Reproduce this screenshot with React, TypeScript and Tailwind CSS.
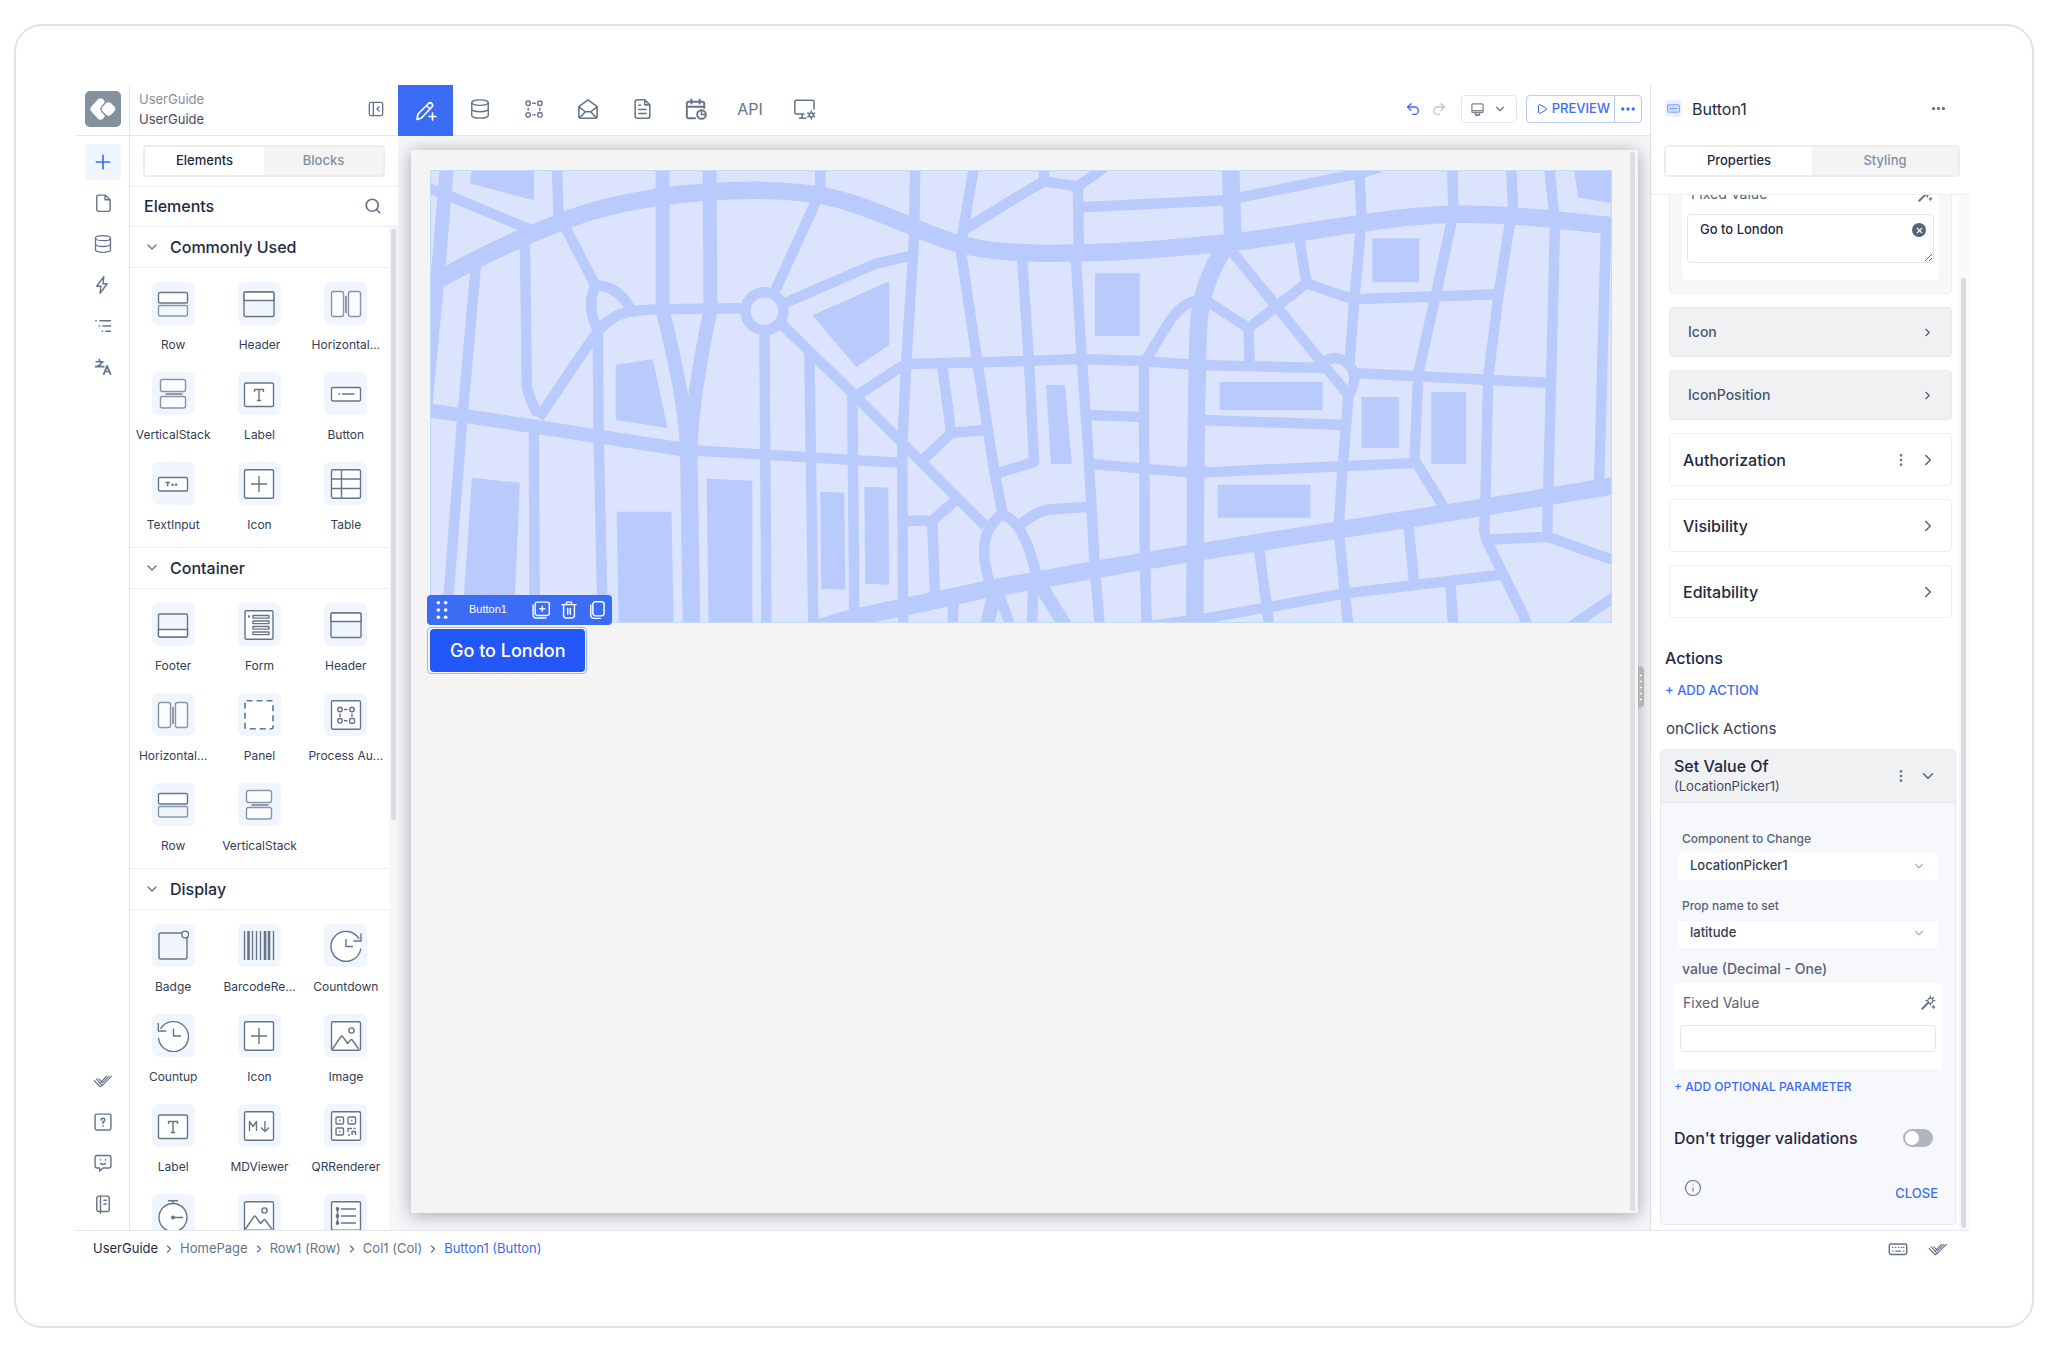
import React, { useState } from 'react';
import {
  ChevronDown,
  ChevronRight,
  Database,
  Ellipsis,
  EllipsisVertical,
  Info,
  Play,
  Redo2,
  Search,
  Undo2,
  X,
} from 'lucide-react';

interface IconProps {
  size?: number;
  className?: string;
  children?: React.ReactNode;
}

// Base for the 24px line icons
function LineIcon({ size = 20, className = '', children }: IconProps) {
  return (
    <svg
      width={size}
      height={size}
      viewBox="0 0 24 24"
      fill="none"
      stroke="currentColor"
      strokeWidth="1.7"
      strokeLinecap="round"
      strokeLinejoin="round"
      className={className}
      aria-hidden="true"
    >
      {children}
    </svg>
  );
}

// Base for the drawings inside the element tiles
function TileIcon({ children }: { children: React.ReactNode }) {
  return (
    <svg
      viewBox="0 0 32 32"
      fill="none"
      stroke="#66748a"
      strokeWidth="1.4"
      strokeLinejoin="round"
      className="h-8 w-8"
      aria-hidden="true"
    >
      {children}
    </svg>
  );
}

const tileIcons: Record<string, React.ReactNode> = {
  row: (
    <>
      <rect x="1.5" y="4.5" width="29" height="10.5" rx="1.5" fill="#fff" />
      <rect x="1.5" y="17.5" width="29" height="10.5" rx="1.5" opacity="0.75" />
    </>
  ),
  header: (
    <>
      <rect x="1" y="4" width="30" height="24.5" rx="1.5" />
      <path d="M1 12.5V5.5Q1 4 2.5 4h27Q31 4 31 5.5v7z" fill="#fff" />
    </>
  ),
  footer: (
    <>
      <rect x="1.5" y="5" width="29" height="23" rx="1.5" />
      <path d="M1.5 20.5v6q0 1.5 1.5 1.5h26q1.5 0 1.5-1.5v-6z" fill="#fff" />
    </>
  ),
  horizontal: (
    <>
      <rect x="1.5" y="3.5" width="12" height="25" rx="2" fill="#fff" opacity="0.75" />
      <rect x="18.5" y="3.5" width="12" height="25" rx="2" fill="#fff" opacity="0.75" />
      <path d="M16 8v17" />
    </>
  ),
  vertical: (
    <>
      <rect x="3.5" y="1.5" width="25" height="12" rx="2" fill="#fff" opacity="0.75" />
      <rect x="3.5" y="18.5" width="25" height="11.5" rx="2" fill="#fff" opacity="0.75" />
      <path d="M8.5 16h17" />
    </>
  ),
  label: (
    <>
      <rect x="1.5" y="5" width="29" height="23.5" rx="1.5" fill="#fff" />
      <path d="M11.5 14v-2.5h9V14M16 11.5v11M13.8 22.5h4.4" />
    </>
  ),
  button: (
    <>
      <rect x="1.5" y="9.5" width="29" height="13.5" rx="1.5" fill="#fff" />
      <path d="M8.5 16h1.6M12 16h12.5" />
    </>
  ),
  textInput: (
    <>
      <rect x="1.5" y="9.5" width="29" height="13.5" rx="1.5" fill="#fff" />
      <path d="M8.5 14.5h4.5M10.7 14.5v4" />
      <circle cx="15.5" cy="16.8" r="0.6" />
      <circle cx="19" cy="16.8" r="0.6" />
    </>
  ),
  icon: (
    <>
      <rect x="1.5" y="1.8" width="29" height="28.5" rx="1.5" fill="#fff" />
      <path d="M16 8v16M8 16h16" />
    </>
  ),
  table: (
    <>
      <rect x="1.5" y="1.8" width="29" height="28.5" rx="1.5" fill="#fff" />
      <path d="M11.5 1.8v28.5M1.5 11h29M1.5 20.5h29" />
    </>
  ),
  form: (
    <>
      <rect x="2" y="1.8" width="28" height="28.5" rx="1.5" fill="#fff" />
      <circle cx="6" cy="7.5" r="0.5" />
      <rect x="10" y="6.5" width="16" height="2.6" />
      <rect x="10" y="12" width="16" height="2.6" />
      <rect x="10" y="17.5" width="16" height="2.6" />
      <rect x="10" y="23" width="16" height="2.6" />
    </>
  ),
  panel: <rect x="2" y="1.8" width="28" height="28" rx="1.5" fill="#fff" strokeDasharray="6 4" strokeWidth="1.6" />,
  process: (
    <>
      <rect x="1.5" y="1.8" width="29" height="28.5" rx="1.5" fill="#fff" />
      <circle cx="10" cy="10.5" r="2.3" />
      <circle cx="22" cy="10.5" r="2.3" />
      <circle cx="10" cy="21.8" r="2.3" />
      <rect x="19.7" y="19.5" width="4.8" height="4.8" rx="1" />
      <path d="M14 10.5h3.5M14 21.8h3.5M10 14.5v3.5M22 14.5v3.5" />
    </>
  ),
  badge: (
    <>
      <rect x="2" y="3" width="28" height="26" rx="1.5" />
      <circle cx="28.2" cy="4.5" r="3.4" fill="#fff" />
    </>
  ),
  barcode: (
    <>
      <path d="M1.5 1v29M9.5 1v29M13.5 1v29M17.5 1v29M30.5 1v29" />
      <path d="M5.5 1v29M22 1v29M26 1v29" strokeWidth="2.6" />
    </>
  ),
  countdown: (
    <>
      <circle cx="16" cy="16.5" r="14.5" fill="#fff" stroke="none" />
      <path d="M30.8 18.5A15 15 0 1 1 29 9M31 3.5v7.5h-7.5M16 9v7.5h7" />
    </>
  ),
  countup: (
    <>
      <circle cx="16" cy="16" r="14.5" fill="#fff" stroke="none" />
      <path d="M1.5 18A15 15 0 1 0 3.5 9M1.3 3v8h8M16.5 8.5v7.5h7.5" />
    </>
  ),
  image: (
    <>
      <rect x="1.5" y="1.8" width="29" height="28.5" rx="1.5" fill="#fff" />
      <circle cx="21.5" cy="10.5" r="2.6" />
      <path d="M2.5 29l8.5-12.5q.8-.8 1.6 0l5 7 3-3.5q.8-.8 1.6 0l6.5 9" />
    </>
  ),
  markdown: (
    <>
      <rect x="1.5" y="1.8" width="29" height="28.5" rx="1.5" fill="#fff" />
      <path d="M6.5 21V11.5l3.5 5 3.5-5V21M22 11v10.5M18 17.5l4 4 4-4" />
    </>
  ),
  qr: (
    <>
      <rect x="1.5" y="1.8" width="29" height="28.5" rx="1.5" fill="#fff" />
      <rect x="6" y="7" width="7.5" height="7" rx="1" />
      <rect x="18" y="7" width="7.5" height="7" rx="1" />
      <rect x="6" y="18" width="7.5" height="7" rx="1" />
      <path d="M9 10.5h1.5M21 10.5h1.5M9 21.5h1.5M18 22v-3.5h4M25.5 18.5h-2M25.5 25v-3.5h-3.5V25M18 25h2" />
    </>
  ),
  timer: (
    <>
      <circle cx="16" cy="17.5" r="14" fill="#fff" />
      <path d="M16 3.5V.5M11 .8h10M16 17.5h10" />
      <circle cx="16" cy="17.5" r="1.3" fill="#66748a" />
    </>
  ),
  list: (
    <>
      <rect x="1.5" y="1.8" width="29" height="28.5" rx="1.5" fill="#fff" />
      <path d="M7.5 9v14M11 9h15M11 16h15M11 23h15" />
      <circle cx="7.5" cy="9" r="1.2" fill="#66748a" />
      <circle cx="7.5" cy="16" r="1.2" fill="#66748a" />
      <circle cx="7.5" cy="23" r="1.2" fill="#66748a" />
    </>
  ),
};

const sections = [
  {
    title: 'Commonly Used',
    items: [
      ['Row', 'row'],
      ['Header', 'header'],
      ['Horizontal...', 'horizontal'],
      ['VerticalStack', 'vertical'],
      ['Label', 'label'],
      ['Button', 'button'],
      ['TextInput', 'textInput'],
      ['Icon', 'icon'],
      ['Table', 'table'],
    ],
  },
  {
    title: 'Container',
    items: [
      ['Footer', 'footer'],
      ['Form', 'form'],
      ['Header', 'header'],
      ['Horizontal...', 'horizontal'],
      ['Panel', 'panel'],
      ['Process Au...', 'process'],
      ['Row', 'row'],
      ['VerticalStack', 'vertical'],
    ],
  },
  {
    title: 'Display',
    items: [
      ['Badge', 'badge'],
      ['BarcodeRe...', 'barcode'],
      ['Countdown', 'countdown'],
      ['Countup', 'countup'],
      ['Icon', 'icon'],
      ['Image', 'image'],
      ['Label', 'label'],
      ['MDViewer', 'markdown'],
      ['QRRenderer', 'qr'],
      ['', 'timer'],
      ['', 'image'],
      ['', 'list'],
    ],
  },
];

const DoubleCheck = ({ size = 20 }: IconProps) => (
  <LineIcon size={size}>
    <path
      d="M1.5 11.5l6 6M4 9.5L11 17.5L22 6.500M8.5 14.5L16 6.500M1.5 11.5l7 7.500L11.500 16.500M7 9.500l4.500 4.500L19 6.500"
      strokeWidth="1.400"
    />
  </LineIcon>
);

const Wand = () => (
  <LineIcon size={15} className="text-[#66748a]">
    <path d="M2 22L12 12" strokeWidth="3" />
    <circle cx="15" cy="9" r="4" />
    <path d="M15 2v2M15 14v2M8 9h2M20 9h2M20 4l-1.5 1.5M20 17v4M18 19h4" strokeWidth="2.2" />
  </LineIcon>
);

const Logo = () => (
  <svg viewBox="0 0 36 36" className="h-9 w-9" role="img" aria-label="Home">
    <rect width="36" height="36" rx="5" fill="#84919f" />
    <path
      d="M15.500 11.500L9.500 18L15.500 24.500"
      fill="none"
      stroke="#fff"
      strokeWidth="8"
      strokeLinecap="round"
      strokeLinejoin="round"
    />
    <rect
      x="-6.500"
      y="-6.500"
      width="13"
      height="13"
      rx="4.500"
      transform="translate(23.500 18) rotate(45)"
      fill="#fff"
      stroke="#84919f"
      strokeWidth="1.400"
    />
  </svg>
);

const railTop = [
  {
    label: 'Pages',
    icon: (
      <LineIcon>
        <path d="M7 2.5h7.5L20.5 8v11.5q0 2.5-2.5 2.5H7q-2.5 0-2.5-2.5V5Q4.5 2.5 7 2.5zM14.5 2.5V8h6" />
      </LineIcon>
    ),
  },
  { label: 'Data', icon: <Database size={20} strokeWidth={1.6} /> },
  {
    label: 'Events',
    icon: (
      <LineIcon>
        <path d="M13 2L4.5 13.500h5L8.500 22l8.500-11.500h-5z" />
      </LineIcon>
    ),
  },
  {
    label: 'Outline',
    icon: (
      <LineIcon size={18}>
        <path d="M2.500 5h.4M8 5h14M7 12h.4M12 12h10M11 19h.4M16 19h6" strokeWidth="2.200" />
      </LineIcon>
    ),
  },
  {
    label: 'Languages',
    icon: (
      <LineIcon size={18}>
        <path d="M3 5h9M7 2l1 3M2 11.5h11M11 5.5Q9 9 4 11.5M13 21.5l4.5-11 4.5 11M14.5 18h6" strokeWidth="2.300" />
      </LineIcon>
    ),
  },
];

const railBottom = [
  { label: 'Checks', icon: <DoubleCheck /> },
  {
    label: 'Help',
    icon: (
      <LineIcon>
        <rect x="2.5" y="2.5" width="19" height="19" rx="2" />
        <path d="M9.8 9.5q.2-2 2.2-2t2.2 1.9Q14.2 11 12 12v1.5M12 16.5v.3" strokeWidth="2" />
      </LineIcon>
    ),
  },
  {
    label: 'Feedback',
    icon: (
      <LineIcon>
        <path d="M5 3h14q2.5 0 2.5 2.5v10Q21.5 18 19 18h-7l-4 3.5V18H5q-2.5 0-2.5-2.5v-10Q2.5 3 5 3z" />
        <path d="M9 8v.4M15 8v.4M9 12.5q3 2.5 6 0" />
      </LineIcon>
    ),
  },
  {
    label: 'Docs',
    icon: (
      <LineIcon>
        <rect x="4.5" y="2.5" width="15" height="18.5" rx="2.5" />
        <path d="M9 2.5V23M13 7.5h3M13 12h3" />
      </LineIcon>
    ),
  },
];

const modules = [
  { label: 'Data models', icon: <Database size={22} strokeWidth={1.5} /> },
  {
    label: 'Processes',
    icon: (
      <LineIcon size={20}>
        <circle cx="5" cy="5" r="2.700" />
        <circle cx="19" cy="5" r="2.700" />
        <circle cx="5" cy="19" r="2.700" />
        <rect x="16.500" y="16.500" width="5.200" height="5.200" rx="1.200" />
        <path d="M10.500 5h3M10.500 19h3M5 11v2.500M19 11v2.500" />
      </LineIcon>
    ),
  },
  {
    label: 'Mail templates',
    icon: (
      <LineIcon size={22}>
        <path d="M2 9.5L12 2l10 7.5V20q0 2-2 2H4q-2 0-2-2zM2.5 10l6.5 5h6l6.5-5M3 21.5L9 15M21 21.5L15 15" />
      </LineIcon>
    ),
  },
  {
    label: 'Documents',
    icon: (
      <LineIcon size={22}>
        <path d="M7 2h8l5.5 5.5V19.5Q20.5 22 18 22H7q-2.5 0-2.5-2.5v-15Q4.5 2 7 2zM15 2v5.5h5.5M8.5 8h2M8.5 12.5h8M8.5 17h8" />
      </LineIcon>
    ),
  },
  {
    label: 'Schedules',
    icon: (
      <LineIcon size={22}>
        <path d="M11 22H4q-2 0-2-2V6q0-2 2-2h15q2 0 2 2v5M2 9.5h19M7 1.5V6M16 1.5V6" strokeWidth="2.100" />
        <circle cx="18" cy="18" r="4.7" strokeWidth="2.100" />
        <path d="M18 13.5V18h4.5" />
      </LineIcon>
    ),
  },
  { label: 'API', icon: <span className="text-base">API</span> },
  {
    label: 'Environment',
    icon: (
      <LineIcon size={22}>
        <path d="M12 17.5H3.5Q2 17.5 2 16V4q0-1.5 1.5-1.5h18Q23 2.500 23 4v8M10 17.5V22M7 22h7" />
        <circle cx="20" cy="18.5" r="2.2" />
        <path d="M20 14.2v1.5M20 21.3v1.5M16.2 16.4l1.3.8M22.5 19.8l1.3.8M16.2 20.6l1.3-.8M22.5 17.2l1.3-.8" />
      </LineIcon>
    ),
  },
];

function Tabs({ tabs, active, onChange }: { tabs: string[]; active: string; onChange: (tab: string) => void }) {
  return (
    <div role="tablist" className="flex h-8 rounded border-2 border-[#ededed] bg-[#f4f4f4] text-[13px] font-medium">
      {tabs.map((tab) => (
        <button
          key={tab}
          role="tab"
          aria-selected={tab === active}
          onClick={() => onChange(tab)}
          className={tab === active ? 'flex-1 bg-white text-[#1f2a44]' : 'flex-1 text-[#8290a3]'}
        >
          {tab}
        </button>
      ))}
    </div>
  );
}

function Rail() {
  return (
    <nav className="flex w-[54px] shrink-0 flex-col border-r border-[#e5e7eb] text-[#66748a]">
      <div className="flex h-[51px] shrink-0 items-center justify-center border-b border-[#e5e7eb] pb-[2px]">
        <Logo />
      </div>
      <div className="flex flex-1 flex-col items-center gap-[5px] py-2">
        <button aria-label="Add element" className="flex h-9 w-9 items-center justify-center rounded bg-[#f0f6ff] text-[#3b6cf6]">
          <LineIcon>
            <path d="M12 4v16M4 12h16" strokeWidth="2" />
          </LineIcon>
        </button>
        {railTop.map((item) => (
          <button key={item.label} aria-label={item.label} className="flex h-9 w-9 items-center justify-center">
            {item.icon}
          </button>
        ))}
        <div className="flex-1" />
        {railBottom.map((item) => (
          <button key={item.label} aria-label={item.label} className="flex h-9 w-9 items-center justify-center">
            {item.icon}
          </button>
        ))}
      </div>
    </nav>
  );
}

function ElementsPanel() {
  const [tab, setTab] = useState('Elements');

  return (
    <aside className="flex w-[268px] shrink-0 flex-col text-[#1f2a44]">
      <div className="flex h-[51px] shrink-0 items-center justify-between border-b border-[#e5e7eb] pr-[10px] pb-[2px] pl-[9px] text-[13px] leading-5 text-[#3f4b62]">
        <div>
          <p className="text-[#8290a3]">UserGuide</p>
          <p>UserGuide</p>
        </div>
        <button aria-label="Collapse panel" className="p-1 text-[#66748a]">
          <LineIcon size={16}>
            <rect x="2" y="2" width="20" height="20" rx="2.5" strokeWidth="2" />
            <path d="M8 2v20M16.5 9l-3 3 3 3" strokeWidth="2" />
          </LineIcon>
        </button>
      </div>
      <div className="h-[51px] shrink-0 border-b border-[#eceef1] px-[13px] py-[9px]">
        <Tabs tabs={['Elements', 'Blocks']} active={tab} onChange={setTab} />
      </div>
      <div className="flex h-10 shrink-0 items-center justify-between border-b border-[#eceef1] pr-3 pb-[2px] pl-[14px]">
        <h2 className="text-base font-medium">Elements</h2>
        <button aria-label="Search elements" className="px-1 text-[#66748a]">
          <Search size={18} strokeWidth={2.3} />
        </button>
      </div>
      <div className="flex min-h-0 flex-1">
        <div className="min-w-0 flex-1 overflow-hidden">
          {sections.map((section) => (
            <section key={section.title} className="border-b border-[#eceef1]">
              <h3 className="border-b border-[#eceef1]">
                <button className="flex h-10 w-full items-center gap-[10px] pl-[14px] text-base font-medium">
                  <ChevronDown size={16} className="text-[#66748a]" />
                  {section.title}
                </button>
              </h3>
              <div className="grid grid-cols-3 gap-y-[18px] pt-[14px] pb-[13px]">
                {section.items.map(([name, icon], i) => (
                  <div key={i} className="flex flex-col items-center gap-[11px]">
                    <div className="flex h-[43px] w-[43px] items-center justify-center rounded-md bg-[#f1f6fe]">
                      <TileIcon>{tileIcons[icon]}</TileIcon>
                    </div>
                    {name && <span className="text-[12px] leading-[18px] whitespace-nowrap text-[#344057]">{name}</span>}
                  </div>
                ))}
              </div>
            </section>
          ))}
        </div>
        <div className="w-[9px] shrink-0 bg-[#f6f7f9] px-[2px] pt-[2px]">
          <div className="h-[59%] rounded-full bg-[#dadce2]" />
        </div>
      </div>
    </aside>
  );
}

function TopBar() {
  return (
    <header className="flex h-[51px] shrink-0 items-center justify-between border-b border-[#e5e7eb] pr-2 text-[#66748a]">
      <div className="flex self-stretch">
        <button aria-label="Designer" className="-mb-px flex w-[55px] items-center justify-center bg-[#3b6cf6] text-white">
          <LineIcon size={24}>
            <path d="M3 20.5l1-5.5L14.5 4.5q1.7-1.5 3.3 0 1.7 1.7 0 3.5L7.5 19zM12.5 6.5l3.5 3.5M18.5 14v7M15 17.500h7" />
          </LineIcon>
        </button>
        {modules.map((item) => (
          <button key={item.label} aria-label={item.label} className="flex w-[54px] items-center justify-center pb-[2px]">
            {item.icon}
          </button>
        ))}
      </div>
      <div className="flex items-center pb-[2px]">
        <button aria-label="Undo" className="mr-[10px] text-[#3b6cf6]">
          <Undo2 size={16} />
        </button>
        <button aria-label="Redo" className="mr-[14px] text-[#c0c5cd]">
          <Redo2 size={16} />
        </button>
        <button aria-label="Device" className="mr-[9px] flex h-7 w-14 items-center justify-center gap-2 rounded border border-[#e3e6ea]">
          <LineIcon size={15} className="text-[#7d8796]">
            <rect x="3" y="3" width="18" height="14" rx="2" strokeWidth="2" />
            <path d="M4 14h16M9 18v3h6v-3" strokeWidth="2.5" />
          </LineIcon>
          <ChevronDown size={14} />
        </button>
        <div className="flex h-7 items-stretch rounded border border-[#b9cbfc] text-[13px] font-medium text-[#3b6cf6]">
          <button className="flex items-center gap-1 border-r border-[#b9cbfc] pr-1 pl-[9px]">
            <Play size={12} />
            PREVIEW
          </button>
          <button aria-label="More preview options" className="flex w-[26px] items-center justify-center">
            <Ellipsis size={18} strokeWidth={2.5} />
          </button>
        </div>
      </div>
    </header>
  );
}

const mapBuildings = [
  '41,0 103,0 103,30 39,13',
  '185,195 222,189 237,258 185,250',
  '382,145 459,111 459,175 426,197',
  '41,308 89,313 83,453 31,453',
  '186,342 241,342 243,453 188,453',
  '276,309 322,311 322,453 278,453',
  '390,322 414,323 415,420 391,419',
  '434,317 458,318 459,415 435,414',
  '1145,0 1182,0 1182,33 1149,27',
  '665,103 710,103 710,166 665,166',
  '943,68 990,68 990,112 943,112',
  '790,212 893,212 893,240 790,240',
  '932,227 970,227 970,278 932,278',
  '1002,222 1037,222 1037,294 1002,294',
  '788,315 881,315 881,348 788,348',
  '616,215 635,215 642,294 621,294',
];

const mapStreets = [
  // west
  'M255 280L472 293',
  'M45 95L31 253L15 460',
  'M94 65L96 217Q98 228 107 244',
  'M103 255L104 460',
  'M-4 17L22 27L101 60',
  'M126 -4L128 50M132 52L165 116',
  'M165 115Q189 116 201 141',
  'M165 115Q155 136 167 160',
  'M316 138L229 139Q203 140 193 143Q180 147 168 160Q150 185 108 248',
  'M167 163L168 267L172 458',
  'M390 -4L390 24M387 28L345 120',
  'M352 134L444 94L482 85',
  'M485 -4L484 60L483 83L476 193L472 277L473 458',
  'M350 153L421 222L555 356',
  'M426 226L478 192',
  'M334 160L336 458',
  'M379 182L383 458',
  'M422 223L424 443',
  // middle
  'M544 -4L532 66',
  'M533 60L590 25L614 11M614 -4L614 11L648 16L676 -4',
  'M648 14L649 85L646 90L652 190L659 290L665 400L670 458',
  'M651 37L796 30L930 3L950 -3',
  'M530 76L547 190L564 300L573 346',
  'M592 86L599 193L604 291Q604 293 602 293L565 304',
  'M512 194L521 263L554 260M521 263L493 290',
  'M526 330L502 351L474 351M502 351L505 428',
  'M560 414Q544 366 571 345Q594 348 608 412',
  'M589 356Q604 343 617 340L659 337',
  'M524 425L522 458M569 425L581 458M603 418L602 458',
  'M474 194L595 191L649 189L712 191L768 195L900 198',
  'M714 190L715 390L717 458',
  'M657 245L714 247M660 294L764 303L987 293L1015 338',
  'M716 190L735 159Q750 133 768 130',
  'M770 250L916 255',
  'M779 132L819 158L877 113L923 129L1068 124',
  'M819 158L820 198M870 70L877 113',
  // east
  'M803 82L896 197L919 225',
  'M893 192Q912 182 922 198Q929 210 919 225L913 300L909 360L919 458',
  'M930 0L932 45L931 63L925 127L920 194',
  'M1023 -4L1024 40L1022 53L1006 127L989 203L985 293',
  'M1082 -4L1084 40L1080 57L1069 127L1059 207L1056 337L1055 358Q1055 364 1058 372L1094 445L1100 460',
  'M1120 -4L1126 52L1122 210L1119 323L1118 367L1058 370M1118 367L1186 391',
  'M1177 55L1170 318',
  'M924 203L1123 213',
  'M700 459L780 448L914 424L1072 405',
  'M829 376L840 458M979 354L985 415M1021 412L1024 458',
  'M1190 424L1140 458',
];

const mapAvenues = [
  'M16 -4L7 103L-6 240',
  'M-4 240L255 280',
  'M232 -4L232 140Q256 236 256 280',
  'M279 -4L280 140Q261 230 260 280',
  'M564 425L556 460M608 412L638 460',
];

const mapHighways = [
  'M-10 118L14 106C50 86 90 67 134 50C190 29 260 20 326 20S420 30 484 57C530 78 560 82 610 83C680 84 740 78 803 72C870 64 960 45 1025 44S1130 51 1190 56',
  'M360 467L419 449L555 420L665 400L764 383L910 360L1057 337L1190 315',
  'M258 275L261 460',
  'M801 -4L803 66C785 90 771 120 769 155C767 190 767 250 766 300L765 460',
];

function LocationMap() {
  return (
    <svg
      viewBox="0 0 1182 453"
      preserveAspectRatio="xMidYMid slice"
      role="img"
      aria-label="Map"
      className="block aspect-[1182/453] w-full border border-[#bfdcfb] bg-[#dce4fd]"
      fill="none"
      stroke="#b8cbfc"
      strokeLinejoin="round"
    >
      {mapBuildings.map((points) => (
        <polygon key={points} points={points} fill="#b8cbfc" stroke="none" />
      ))}
      {mapStreets.map((d) => (
        <path key={d} d={d} strokeWidth="10.5" />
      ))}
      {mapAvenues.map((d) => (
        <path key={d} d={d} strokeWidth="14" />
      ))}
      {mapHighways.map((d) => (
        <path key={d} d={d} strokeWidth="17.5" />
      ))}
      <circle cx="334" cy="141" r="19" strokeWidth="10.5" fill="#dce4fd" />
    </svg>
  );
}

function Canvas() {
  return (
    <main className="relative flex min-h-0 flex-1 bg-[#f3f5f8] pt-[14px] pr-3 pb-[17px] pl-[13px]">
      <div className="flex flex-1 bg-[#f4f4f4] shadow-[0_2px_16px_rgba(0,0,0,0.32)]">
        <div className="flex-1 pt-5 pr-[18px] pl-[19px]">
          <LocationMap />
          <div className="relative mt-1 -ml-[3px] w-fit rounded border border-[#9db9fb] p-px pl-[2px]">
            <button className="h-[43px] rounded bg-[#2457f8] px-5 text-lg font-medium text-white">
              Go to London
            </button>
            <div className="absolute bottom-full -left-px mb-[3px] flex h-[30px] w-[185px] items-center rounded-sm bg-[#3b6cf6] pl-2 text-white">
              <svg viewBox="0 0 14 22" className="h-5 w-[14px]" fill="currentColor" aria-hidden="true">
                <circle cx="3" cy="3" r="2" />
                <circle cx="11" cy="3" r="2" />
                <circle cx="3" cy="11" r="2" />
                <circle cx="11" cy="11" r="2" />
                <circle cx="3" cy="19" r="2" />
                <circle cx="11" cy="19" r="2" />
              </svg>
              <span className="flex-1 pb-[2px] pl-5 font-['Liberation_Sans',sans-serif] text-[11px]">Button1</span>
              <div className="flex gap-2 pr-[5px]">
                <button aria-label="Duplicate">
                  <LineIcon>
                    <rect x="5" y="2.5" width="17" height="16" rx="2.5" />
                    <path d="M2.5 6v12q0 3.5 3.5 3.5h12M13.5 7.5v6M10.5 10.5h6" />
                  </LineIcon>
                </button>
                <button aria-label="Delete">
                  <LineIcon>
                    <path d="M3.500 5.5h17M9 5V2.5h6V5M5.5 5.5V19q0 2.5 2.5 2.5h8q2.5 0 2.5-2.5V5.5M10.5 10v7M13.5 10v7" />
                  </LineIcon>
                </button>
                <button aria-label="Copy">
                  <LineIcon>
                    <rect x="7" y="2" width="13.5" height="17" rx="3" />
                    <path d="M4.5 6v12q0 4 4 4H16" />
                  </LineIcon>
                </button>
              </div>
            </div>
          </div>
        </div>
        <div className="w-2 shrink-0 py-[2px] pr-[3px]">
          <div className="h-full rounded-full bg-[#dcdee2]" />
        </div>
      </div>
      {/* Resize grip between canvas and inspector */}
      <div className="absolute top-1/2 right-[6px] mt-1 flex h-[41px] w-[6px] -translate-y-1/2 flex-col items-center justify-center gap-[4px] rounded-r bg-[#b4b4b4]">
        {[0, 1, 2, 3, 4].map((i) => (
          <span key={i} className="h-[2px] w-[2px] rounded-full bg-white" />
        ))}
      </div>
    </main>
  );
}

function SelectField({ id, label, value }: { id: string; label: string; value: string }) {
  return (
    <div className="flex flex-col gap-[5px] px-1">
      <label htmlFor={id} className="pl-1 text-[12px] leading-4 font-medium text-[#56637a]">
        {label}
      </label>
      <div className="relative">
        <select
          id={id}
          defaultValue={value}
          className="h-[27px] w-full appearance-none rounded bg-white px-3 pb-[2px] text-[13px] font-medium text-[#344057]"
        >
          <option>{value}</option>
        </select>
        <ChevronDown size={14} className="pointer-events-none absolute top-[7px] right-3 text-[#a3b3cf]" />
      </div>
    </div>
  );
}

function PropertiesPanel() {
  const [tab, setTab] = useState('Properties');
  const [text, setText] = useState('Go to London');
  const [skipValidation, setSkipValidation] = useState(false);

  return (
    <aside className="flex w-80 shrink-0 flex-col border-l border-[#e0e3e8] text-[#1f2a44]">
      <div className="flex h-[47px] shrink-0 items-center gap-[10px] pr-[23px] pl-[14px]">
        <span className="flex h-[17px] w-[17px] items-center justify-center rounded-sm bg-[#eaf1ff]">
          <LineIcon size={13} className="text-[#3b6cf6] opacity-60">
            <rect x="1" y="5" width="22" height="14" rx="2" fill="#b8cbfc" />
            <path d="M6 12h12" strokeWidth="2" />
          </LineIcon>
        </span>
        <h2 className="flex-1 text-base">Button1</h2>
        <button aria-label="Component menu" className="text-[#56637a]">
          <Ellipsis size={17} strokeWidth={2.5} />
        </button>
      </div>
      <div className="h-[63px] shrink-0 border-b border-[#eceef1] pt-[13px] pr-[10px] pl-[13px]">
        <Tabs tabs={['Properties', 'Styling']} active={tab} onChange={setTab} />
      </div>
      <div className="flex min-h-0 flex-1">
        <div className="min-w-0 flex-1 overflow-hidden pl-[9px]">
          <div className="mr-[7px] ml-[9px] flex flex-col gap-[13px]">
            <div className="-mt-[21px] rounded-b border border-[#eceef1] bg-[#f6f7f9] px-3 pb-[13px]">
              <div className="rounded bg-white px-[5px] pt-[9px] pb-[17px]">
                <div className="flex items-center justify-between pr-[1px] pl-1">
                  <label htmlFor="button-text" className="text-sm leading-5 text-[#56637a]">
                    Fixed Value
                  </label>
                  <Wand />
                </div>
                <div className="relative mt-[10px]">
                  <textarea
                    id="button-text"
                    value={text}
                    onChange={(e) => setText(e.target.value)}
                    className="block h-[49px] w-full resize-y rounded border border-[#e3e6ea] bg-white px-3 py-1 text-[13px] leading-5 font-medium text-[#1f2a44]"
                  />
                  <button
                    aria-label="Clear text"
                    onClick={() => setText('')}
                    className="absolute top-[9px] right-2 flex h-[14px] w-[14px] items-center justify-center rounded-full bg-[#56637a] text-white"
                  >
                    <X size={9} strokeWidth={3} />
                  </button>
                </div>
              </div>
            </div>
            {['Icon', 'IconPosition'].map((name) => (
              <button
                key={name}
                className="flex h-[50px] items-center justify-between rounded border border-[#e8eaed] bg-[#eff1f3] pr-[17px] pl-[18px] text-sm font-medium text-[#4a5770]"
              >
                {name}
                <ChevronRight size={13} />
              </button>
            ))}
            {['Authorization', 'Visibility', 'Editability'].map((name) => (
              <div key={name} className="flex h-[53px] items-center rounded border border-[#eceef1] pr-[14px] pl-[13px]">
                <h3 className="flex-1 text-base font-medium">{name}</h3>
                {name === 'Authorization' && (
                  <button aria-label="Authorization options" className="mr-[10px] text-[#66748a]">
                    <EllipsisVertical size={16} strokeWidth={2} />
                  </button>
                )}
                <button aria-label={`Open ${name}`} className="text-[#56637a]">
                  <ChevronRight size={18} />
                </button>
              </div>
            ))}
          </div>

          <h3 className="mt-7 pl-[5px] text-base font-medium">Actions</h3>
          <button className="mt-[10px] block pl-[5px] text-[13px] leading-5 font-medium text-[#3b6cf6]">+ ADD ACTION</button>
          <h4 className="mt-[17px] pl-[6px] text-[15px] leading-6 text-[#344057]">onClick Actions</h4>

          <div className="mt-2 mr-[3px] rounded border border-[#e6e8ec] bg-[#f6f8fb]">
            <div className="flex h-[53px] items-center border-b border-[#e6e8ec] bg-[#eff1f3] pr-[18px] pl-[13px]">
              <div className="flex-1">
                <p className="text-base leading-5 font-medium">Set Value Of</p>
                <p className="text-[13px] leading-5 text-[#3f4b62]">(LocationPicker1)</p>
              </div>
              <button aria-label="Action options" className="mr-[10px] text-[#66748a]">
                <EllipsisVertical size={16} strokeWidth={2} />
              </button>
              <button aria-label="Collapse action" className="text-[#56637a]">
                <ChevronDown size={18} />
              </button>
            </div>
            <div className="flex flex-col px-[13px] pt-7 pb-[21px]">
              <div className="flex flex-col gap-[18px]">
                <SelectField id="component" label="Component to Change" value="LocationPicker1" />
                <SelectField id="prop-name" label="Prop name to set" value="latitude" />
              </div>
              <label htmlFor="value" className="mt-[11px] pl-2 text-sm leading-5 font-medium text-[#56637a]">
                value (Decimal - One)
              </label>
              <div className="mt-1 rounded bg-white px-[6px] pt-[10px] pb-[17px]">
                <div className="flex items-center justify-between pl-[3px] text-sm leading-5 text-[#56637a]">
                  Fixed Value
                  <Wand />
                </div>
                <input id="value" type="text" className="mt-3 block h-[27px] w-full rounded border border-[#e3e6ea] px-2 text-[13px]" />
              </div>
              <button className="mt-2 self-start text-[12px] leading-5 font-medium text-[#3b6cf6]">+ ADD OPTIONAL PARAMETER</button>
              <label className="mt-[29px] flex items-center justify-between pr-[9px] text-base leading-6 font-medium">
                Don't trigger validations
                <span className="relative flex">
                  <input
                    type="checkbox"
                    checked={skipValidation}
                    onChange={(e) => setSkipValidation(e.target.checked)}
                    className="h-[18px] w-[30px] appearance-none rounded-full bg-[#b0b6c0] checked:bg-[#3b6cf6]"
                  />
                  <span
                    className={
                      skipValidation
                        ? 'pointer-events-none absolute top-[2px] left-[14px] h-[14px] w-[14px] rounded-full bg-white'
                        : 'pointer-events-none absolute top-[2px] left-[2px] h-[14px] w-[14px] rounded-full bg-white'
                    }
                  />
                </span>
              </label>
              <div className="mt-[29px] flex items-start justify-between pr-1 pl-[10px]">
                <Info size={18} strokeWidth={1.5} className="text-[#66748a]" />
                <button className="mt-1 text-[13px] leading-5 font-medium text-[#3b6cf6]">CLOSE</button>
              </div>
            </div>
          </div>
        </div>
        <div className="flex w-[11px] shrink-0 flex-col bg-[#f8f9fa] pr-[4px] pl-[2px]">
          <div className="h-[8%]" />
          <div className="mb-[2px] flex-1 rounded-full bg-[#dadce2]" />
        </div>
      </div>
    </aside>
  );
}

function StatusBar() {
  const crumbs = ['UserGuide', 'HomePage', 'Row1 (Row)', 'Col1 (Col)', 'Button1 (Button)'];

  return (
    <footer className="flex h-[37px] shrink-0 items-center justify-between border-t border-[#e5e7eb] pr-[22px] pl-4 text-[#66748a]">
      <nav className="flex items-center gap-1 text-[13px]" aria-label="Breadcrumb">
        {crumbs.map((crumb, i) => (
          <React.Fragment key={crumb}>
            {i > 0 && <ChevronRight size={12} strokeWidth={2.5} />}
            <a
              href="#"
              className={
                i === 0 ? 'px-px text-[#1f2a44]' : i === crumbs.length - 1 ? 'px-px text-[#3b6cf6]' : 'px-px'
              }
            >
              {crumb}
            </a>
          </React.Fragment>
        ))}
      </nav>
      <div className="flex items-center gap-5">
        <button aria-label="Keyboard shortcuts">
          <LineIcon>
            <rect x="1.5" y="6" width="21" height="12.5" rx="2" />
            <path d="M5.5 10h.5M9 10h.5M12.5 10h.5M16 10h.5M18.5 10h.5M5.5 14.5h.5M9.5 14.5h5.5M18.5 14.5h.5" />
          </LineIcon>
        </button>
        <button aria-label="Check status">
          <DoubleCheck />
        </button>
      </div>
    </footer>
  );
}

export default function App() {
  return (
    <div className="flex h-screen bg-white pt-6 pr-[14px] pb-[25px] pl-[14px] font-[Inter,sans-serif]">
      <div className="flex min-w-0 flex-1 flex-col rounded-[28px] border-2 border-[#dfe2e7] pt-[59px] pr-[62px] pb-[59px] pl-[60px]">
        <div className="flex min-h-0 flex-1">
          <Rail />
          <ElementsPanel />
          <div className="flex min-w-0 flex-1 flex-col">
            <TopBar />
            <Canvas />
          </div>
          <PropertiesPanel />
        </div>
        <StatusBar />
      </div>
    </div>
  );
}
